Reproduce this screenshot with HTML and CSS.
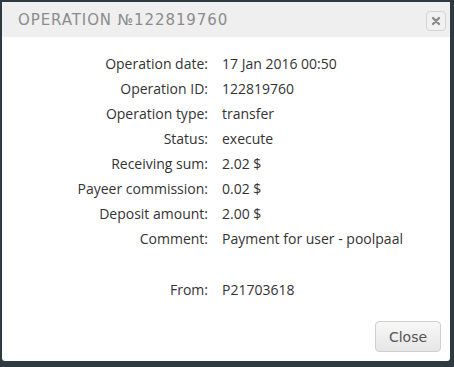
FILE: index.html
```html
<!DOCTYPE html>
<html>
<head>
<meta charset="utf-8">
<link rel="stylesheet" href="styles.css">
</head>
<body>
<div class="modal">
  <div class="modal-header">
    <div class="modal-title">Operation №122819760</div>
    <button class="close-x" type="button" aria-label="close">
      <svg width="10" height="10" viewBox="0 0 10 10"><path d="M2 2 L8 8 M8 2 L2 8" stroke="#888" stroke-width="2.3" stroke-linecap="round"/></svg>
    </button>
  </div>
  <div class="modal-body">
    <div class="details">
      <div class="label">Operation date:</div><div class="value">17 Jan 2016 00:50</div>
      <div class="label">Operation ID:</div><div class="value">122819760</div>
      <div class="label">Operation type:</div><div class="value">transfer</div>
      <div class="label">Status:</div><div class="value">execute</div>
      <div class="label">Receiving sum:</div><div class="value">2.02 $</div>
      <div class="label">Payeer commission:</div><div class="value">0.02 $</div>
      <div class="label">Deposit amount:</div><div class="value">2.00 $</div>
      <div class="label">Comment:</div><div class="value">Payment for user - poolpaal</div>
      <div class="label spacer"></div><div class="value spacer"></div>
      <div class="label">From:</div><div class="value">P21703618</div>
    </div>
  </div>
  <div class="modal-footer">
    <button class="btn" type="button">Close</button>
  </div>
</div>
</body>
</html>
```

FILE: styles.css
```css
html, body {
  margin: 0;
  padding: 0;
  background: #2e3a40;
  width: 454px;
  height: 367px;
  overflow: hidden;
}
body {
  padding: 2px 4px 6px 2px;
  box-sizing: border-box;
}
.modal {
  background: #fff;
  width: 448px;
  height: 359px;
  display: flex;
  flex-direction: column;
  border-radius: 0 0 3px 3px;
}
.modal-header {
  background: #efefef;
  height: 35px;
  display: flex;
  align-items: center;
  justify-content: space-between;
  padding: 0 4px 0 16px;
  box-sizing: border-box;
}
.modal-title {
  font-family: "DejaVu Sans", sans-serif;
  font-size: 15px;
  letter-spacing: 0.9px;
  text-transform: uppercase;
  color: #8c8c8c;
  font-weight: normal;
}
.close-x {
  width: 20px;
  height: 20px;
  box-sizing: border-box;
  border: 1px solid #d4d4d4;
  border-radius: 4px;
  background: #f1f1f1;
  padding: 0;
  margin-top: 2px;
  display: flex;
  align-items: center;
  justify-content: center;
}
.close-x svg {
  display: block;
}
.modal-body {
  flex: 1;
  padding: 17px 0 0 0;
}
.details {
  display: grid;
  grid-template-columns: 206px 1fr;
  column-gap: 14px;
  row-gap: 5px;
  font-family: "Open Sans", sans-serif;
  font-size: 14px;
  line-height: 20px;
  color: #333;
}
.label {
  text-align: right;
}
.spacer {
  height: 21px;
}
.modal-footer {
  display: flex;
  justify-content: flex-end;
  padding: 0 9px 9px 0;
}
.btn {
  width: 66px;
  height: 31px;
  border: 1px solid #cfcfcf;
  border-radius: 4px;
  background: linear-gradient(#f8f8f8, #e6e6e6);
  color: #555;
  font-family: "DejaVu Sans", sans-serif;
  font-size: 14px;
  padding: 0;
}
```
